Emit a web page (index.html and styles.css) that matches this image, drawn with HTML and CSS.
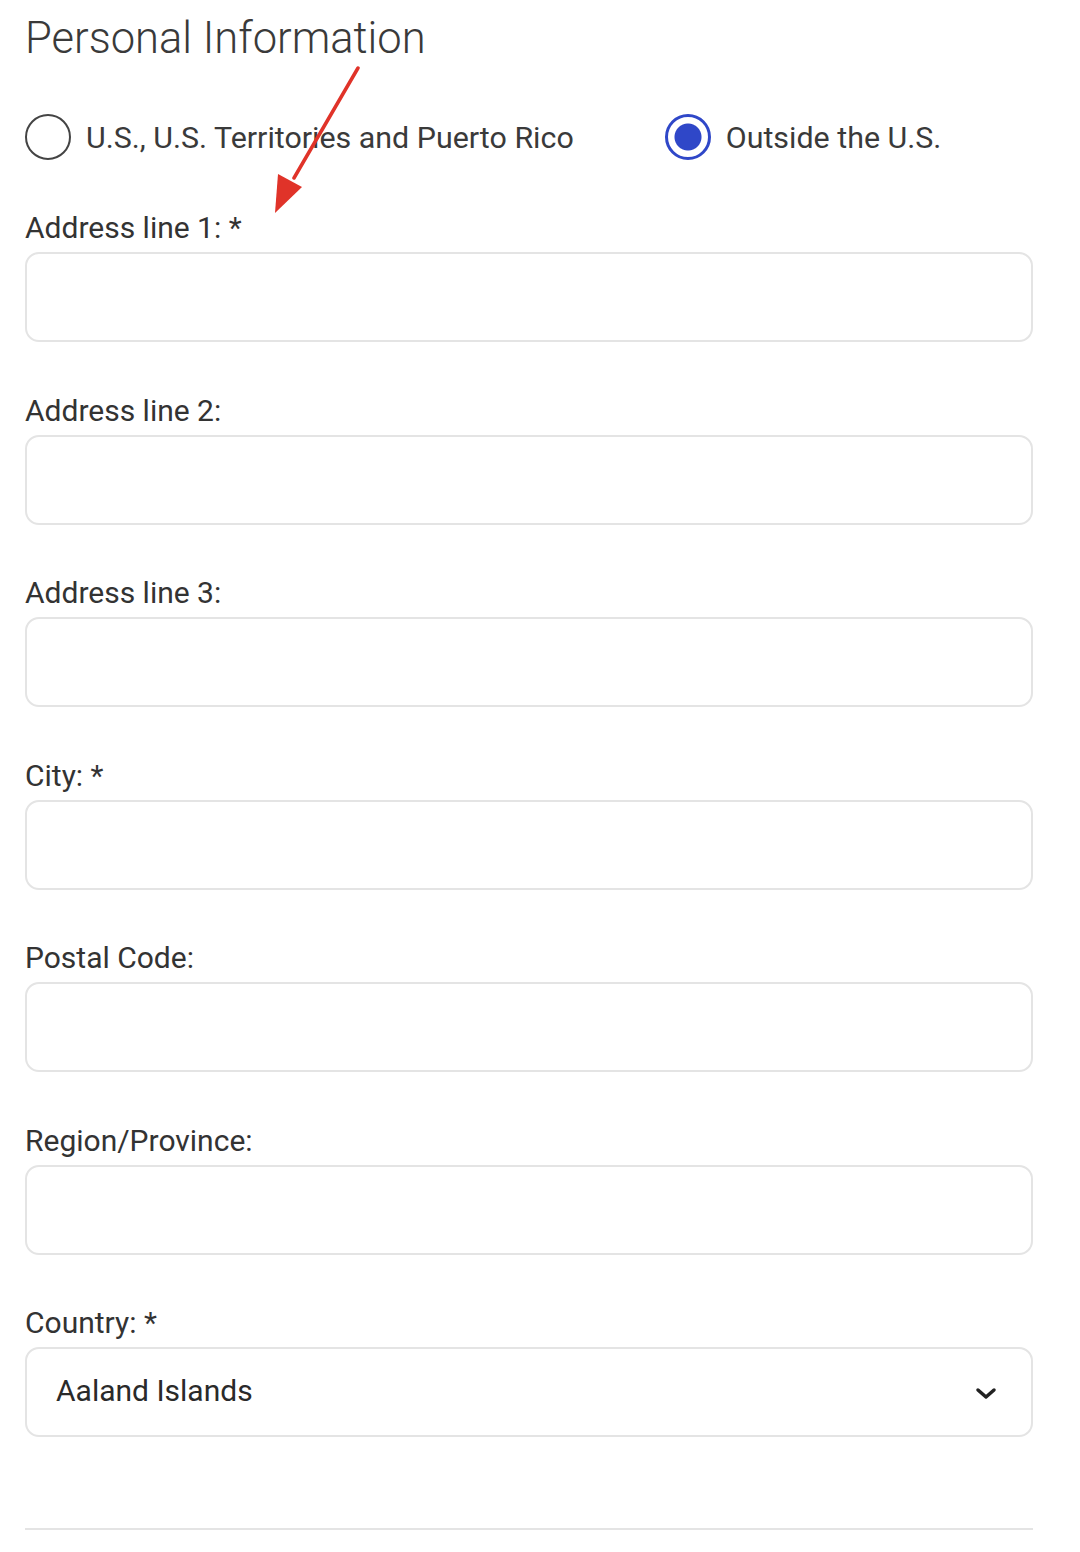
FILE: index.html
```html
<!DOCTYPE html>
<html lang="en">

<head>
    <meta charset="UTF-8">
    <meta name="viewport" content="width=device-width, initial-scale=1.0">
    <title>Personal Information</title>
    <link rel="stylesheet" href="styles.css">
</head>

<body>

    <div class="form-container">
        <h1 class="form-heading">Personal Information</h1>

        <div class="radio-row">
            <label class="radio-option">
                <span class="radio-circle"></span>
                U.S., U.S. Territories and Puerto Rico
            </label>
            <label class="radio-option">
                <span class="radio-circle checked"></span>
                Outside the U.S.
            </label>
        </div>

        <form action="" id="addressDetails" class="address-form">
            <div class="inputDetails">
                <label for="address1">Address line 1: *</label>
                <input type="text" name="address1" id="address1">
            </div>
            <div class="inputDetails">
                <label for="address2">Address line 2:</label>
                <input type="text" name="address2" id="address2">
            </div>
            <div class="inputDetails">
                <label for="address3">Address line 3:</label>
                <input type="text" name="address3" id="address3">
            </div>
            <div class="inputDetails">
                <label for="city">City: *</label>
                <input type="text" name="city" id="city">
            </div>
            <div class="inputDetails">
                <label for="postalCode">Postal Code:</label>
                <input type="text" name="postalCode" id="postalCode">
            </div>
            <div class="inputDetails">
                <label for="region">Region/Province:</label>
                <input type="text" name="region" id="region">
            </div>
            <div class="inputDetails">
                <label for="country">Country: *</label>
                <div class="select-box">
                    <span class="select-value">Aaland Islands</span>
                    <svg class="chevron" width="22" height="14" viewBox="0 0 22 14">
                        <path d="M3 3 L11 10 L19 3" fill="none" stroke="#222" stroke-width="3.5" stroke-linecap="round" stroke-linejoin="round"/>
                    </svg>
                </div>
            </div>
        </form>

        <hr class="divider">

        <!-- annotation arrow drawn over the page -->
        <svg class="annotation" width="120" height="170" viewBox="0 0 120 170">
            <line x1="108" y1="2" x2="44" y2="112" stroke="#e03329" stroke-width="3.5" stroke-linecap="round"/>
            <polygon points="25,147 28,108 52,121" fill="#e03329"/>
        </svg>
    </div>

</body>

</html>
```

FILE: styles.css
```css
body {
    font-family: 'Roboto', 'Liberation Sans', sans-serif;
    background-color: #ffffff;
    color: #333333;
    margin: 0;
}

.form-container {
    position: relative;
    width: 1008px;
    padding: 13px 0 0 25px;
}

h1.form-heading {
    font-size: 43.5px;
    font-weight: 300;
    line-height: 52px;
    margin: 0;
    color: #3a3a3a;
}

.radio-row {
    display: flex;
    gap: 91px;
    margin-top: 49px;
    height: 46px;
    align-items: center;
}

.radio-option {
    display: flex;
    align-items: center;
    gap: 15px;
    font-size: 30.4px;
    color: #3a3a3a;
}

.radio-circle {
    box-sizing: border-box;
    width: 46px;
    height: 46px;
    border: 2px solid #444;
    border-radius: 50%;
    display: inline-block;
}

.radio-circle.checked {
    border: 3.5px solid #2f47c8;
    background: radial-gradient(circle, #2f47c8 0 13px, #fff 14px);
}

.address-form {
    display: flex;
    flex-direction: column;
    gap: 51.5px;
    margin-top: 51px;
}

.inputDetails label {
    display: block;
    font-size: 30px;
    line-height: 34px;
    margin-bottom: 7px;
    color: #333;
}

.inputDetails input,
.select-box {
    box-sizing: border-box;
    width: 100%;
    height: 90px;
    border: 2px solid #e4e4e4;
    border-radius: 14px;
    background-color: #fff;
    margin: 0;
}

.select-box {
    display: flex;
    align-items: center;
    justify-content: space-between;
    padding: 0 34px 4px 29px;
}

.select-value {
    font-size: 30px;
    color: #2a2a2a;
}

.chevron {
    margin-top: 8px;
}

.divider {
    border: none;
    border-top: 2px solid #e4e4e4;
    margin: 91px 0 0 0;
}

.annotation {
    position: absolute;
    left: 250px;
    top: 66px;
}
```
